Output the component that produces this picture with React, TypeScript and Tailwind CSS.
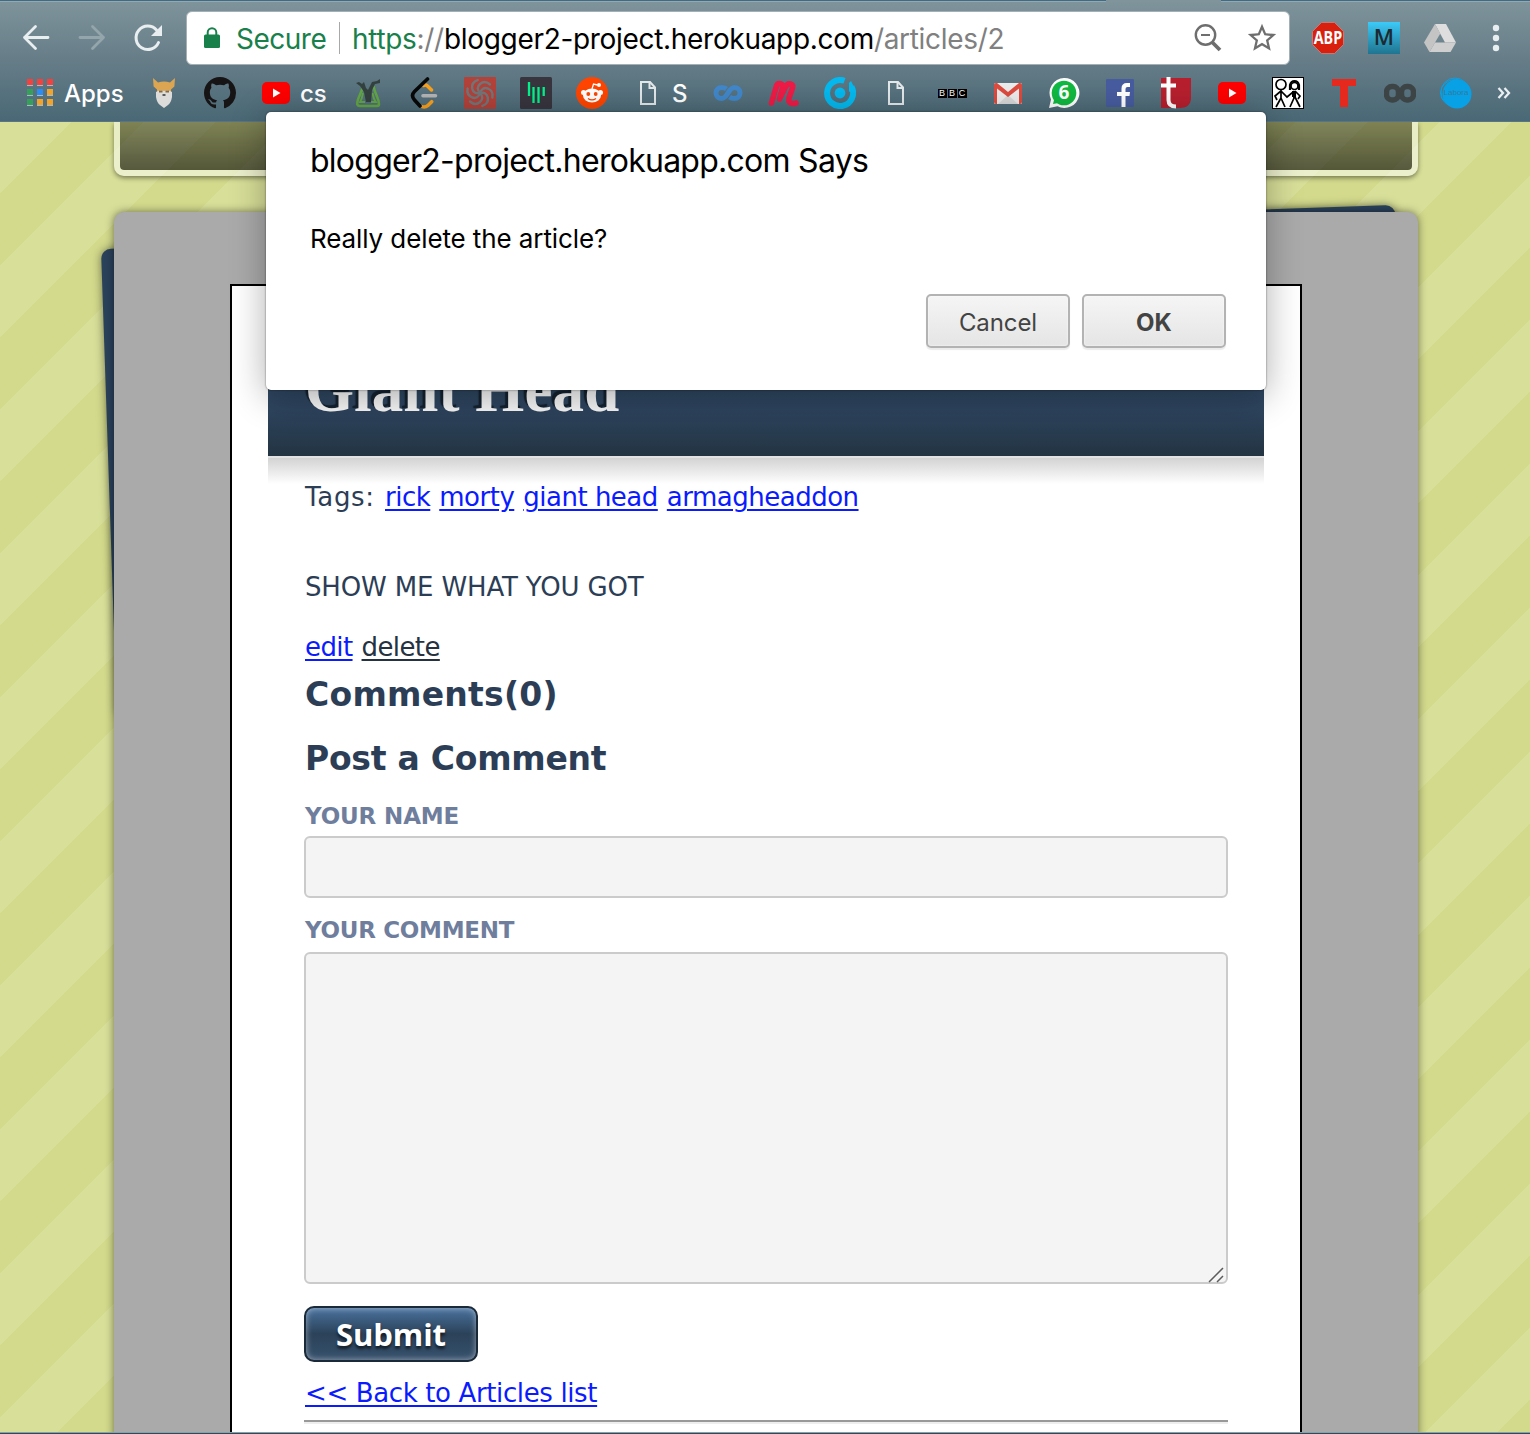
import type { ReactNode } from 'react';
import { MdStarBorder } from 'react-icons/md';

function Box({ children, w = 32, h = 32 }: { children: ReactNode; w?: number; h?: number }) {
  return (
    <svg width={w} height={h} viewBox={`0 0 ${w} ${h}`} className="block shrink-0" fill="none">
      {children}
    </svg>
  );
}

function Cell({ children }: { children: ReactNode }) {
  return <div className="flex w-14 shrink-0 items-center justify-center">{children}</div>;
}

const BackIcon = () => (
  <Box>
    <path d="M28 15.500H4.500M15.500 4.500l-11 11 11 11" stroke="#e9eef0" strokeWidth="2.800" strokeLinecap="round" strokeLinejoin="round" />
  </Box>
);
const ForwardIcon = () => (
  <Box>
    <path d="M4 15.500h23.500M16.500 4.500l11 11-11 11" stroke="#94a5ab" strokeWidth="2.800" strokeLinecap="round" strokeLinejoin="round" />
  </Box>
);
const ReloadIcon = () => (
  <Box>
    <path d="M26.500 20.500A11.700 11.700 0 1 1 24.500 8" stroke="#e9eef0" strokeWidth="3" strokeLinecap="round" />
    <path d="M30 3v11H19z" fill="#e9eef0" />
  </Box>
);
const LockIcon = () => (
  <Box w={24} h={24}>
    <rect x="4" y="8.500" width="16" height="13.500" rx="1.500" fill="#18804a" />
    <path d="M7.700 10V6.500a4.300 4.300 0 0 1 8.600 0V10" stroke="#18804a" strokeWidth="2" />
  </Box>
);
const ZoomOutIcon = () => (
  <Box>
    <circle cx="13.500" cy="13" r="9.700" stroke="#6e6e6e" strokeWidth="2.400" />
    <path d="M9 13h9" stroke="#6e6e6e" strokeWidth="2" />
    <path d="M20.500 20.500l7.500 7.500" stroke="#6e6e6e" strokeWidth="3.800" />
  </Box>
);
const AppsIcon = () => {
  const colors = ['#f5413d', '#f5413d', '#f5413d', '#35a05a', '#2b8cf5', '#f2a32c', '#35a05a', '#f2a32c', '#f2a32c'];
  return (
    <Box w={27} h={28}>
      {colors.map((c, i) => (
        <g key={i}>
          <rect x={(i % 3) * 10} y={Math.floor(i / 3) * 10 + 1} width="6" height="6" fill="#a9bcc4" />
          <rect x={(i % 3) * 10} y={Math.floor(i / 3) * 10} width="6" height="6" fill={c} />
        </g>
      ))}
    </Box>
  );
};
const BeardIcon = () => (
  <Box>
    <path d="M5 1l5 4.500q6-2 12 0L27 1l-.6 8.500-3.400 3V18H9v-5.500l-3.400-3z" fill="#dba552" />
    <path d="M8 15q4-3 8-1 4-2 8 1v5q-1 6-4 8l-4 3-4-3q-3-2-4-8z" fill="#dedcda" />
    <path d="M11 14.500h3.500M17.500 14.500H21" stroke="#8a6a3c" strokeWidth="2" />
    <path d="M14.500 18h3" stroke="#333" strokeWidth="1.500" />
  </Box>
);
const GithubIcon = () => (
  <svg width="32" height="32" viewBox="0 0 16 16" className="block" fill="#161415">
    <path d="M8 0C3.580 0 0 3.580 0 8c0 3.540 2.290 6.530 5.470 7.590.4.070.55-.17.55-.38 0-.19-.01-.82-.01-1.490-2.010.37-2.530-.49-2.690-.94-.09-.23-.48-.94-.82-1.130-.28-.15-.68-.52-.01-.53.63-.01 1.080.58 1.230.82.72 1.210 1.870.87 2.330.66.070-.52.28-.87.51-1.070-1.780-.2-3.640-.89-3.640-3.950 0-.87.31-1.590.82-2.150-.08-.2-.36-1.020.08-2.120 0 0 .67-.21 2.200.82.64-.18 1.320-.27 2-.27s1.360.09 2 .27c1.530-1.040 2.200-.82 2.200-.82.44 1.100.16 1.920.08 2.120.51.56.82 1.270.82 2.150 0 3.070-1.870 3.750-3.650 3.950.29.25.54.73.54 1.480 0 1.070-.01 1.930-.01 2.200 0 .21.15.46.55.38A8.010 8.010 0 0 0 16 8c0-4.420-3.580-8-8-8z" />
  </svg>
);
const YoutubeIcon = () => (
  <Box>
    <rect x="2" y="5" width="28" height="22" rx="5" fill="#fe0000" />
    <path d="M13 11.500v9l7.500-4.500z" fill="#fff" />
  </Box>
);
const SprigIcon = () => (
  <Box>
    <path d="M11 9C10 16 5 21 5.200 27Q5.500 29 8 29h17q2 0 2-2C27 21 23 18 21.500 9" stroke="#62a744" strokeWidth="2.500" />
    <path d="M11 16q-1 6-3 9h5M20.500 16q1 6 3.500 9h-5" stroke="#62a744" strokeWidth="1.800" />
    <path d="M4 6l3-1 3 2 2-2 2 6 2 2 4-8 5-1 3-2v4l-5 1-3 6-1 12h-5l-2-10-4-6z" fill="#33413f" />
  </Box>
);
const LeetIcon = () => (
  <Box>
    <path d="M15.500 8.500q2-1.500 4 .5l4 4M13.700 29.500q3.300 1.500 6-.8l4-4" stroke="#f9a11b" strokeWidth="3.500" strokeLinecap="round" />
    <path d="M19.500 2 6.500 14.500q-4 4 0 8.500l5.500 6" stroke="#080808" strokeWidth="3.600" strokeLinecap="round" />
    <path d="M15 18.700h12.500" stroke="#b5b5b5" strokeWidth="3.600" strokeLinecap="round" />
  </Box>
);
const SwirlIcon = () => (
  <Box>
    <rect width="32" height="32" rx="1" fill="#b2423a" />
    <g stroke="#737679" strokeWidth="2.400" strokeLinecap="round">
      {[0, 60, 120, 180, 240, 300].map((a) => (
        <path key={a} d="M16 16Q11.500 11 16 7q5-4 10 .5" transform={`rotate(${a} 16 16)`} />
      ))}
    </g>
  </Box>
);
const BarsIcon = () => (
  <Box>
    <rect width="32" height="32" rx="1.500" fill="#39353f" />
    <path d="M9 5v14M13.500 10v16M18.500 10v16M23.700 10v9" stroke="#00f58a" strokeWidth="2.300" />
  </Box>
);
const RedditIcon = () => (
  <Box>
    <circle cx="16" cy="16" r="16" fill="#ff4500" />
    <path d="M16 12l1.500-5 4 1" stroke="#fff" strokeWidth="1.300" />
    <circle cx="23" cy="8" r="2" fill="#fff" />
    <circle cx="7.500" cy="15.500" r="2.500" fill="#fff" />
    <circle cx="24.500" cy="15.500" r="2.500" fill="#fff" />
    <ellipse cx="16" cy="18.500" rx="9" ry="7" fill="#fff" />
    <circle cx="12.300" cy="17" r="1.900" fill="#ff4500" />
    <circle cx="19.700" cy="17" r="1.900" fill="#ff4500" />
    <path d="M12 21.500q4 2.800 8 0" stroke="#ff4500" strokeWidth="1.300" />
  </Box>
);
const FileIcon = () => (
  <Box>
    <path d="M9 5h9l5 5.500V27H9z" stroke="#e3e8ea" strokeWidth="2" />
    <path d="M17.500 5v6H23" stroke="#e3e8ea" strokeWidth="2" />
  </Box>
);
const InfinityIcon = () => (
  <Box>
    <path
      d="M14.500 12Q12.500 10.500 9.500 10.500a5.500 5.500 0 0 0 0 11C16 21.500 16 10.500 22.500 10.500a5.500 5.500 0 0 1 0 11q-3 0-5-1.500"
      stroke="#4187ca"
      strokeWidth="5"
    />
  </Box>
);
const MeetIcon = () => (
  <Box>
    <path
      d="M3.500 26 8.500 9q1-3 4-2.300 3 1 2 4.300l-3 11 6-12q2-4 5-3t2 4l-3.500 10q-1 5 3 5.500 2.500.4 4-.5"
      stroke="#ee1b46"
      strokeWidth="5.600"
      strokeLinecap="round"
      strokeLinejoin="round"
    />
  </Box>
);
const TargetIcon = () => (
  <Box>
    <path d="M20.500 3.800A13 13 0 1 0 27.500 9.800" stroke="#04b9ef" strokeWidth="6" />
    <path d="M27 4l4 8-6 3V6z" fill="#04b9ef" />
    <circle cx="16" cy="16" r="5.400" fill="#04b9ef" />
  </Box>
);
const Bbc = () => (
  <div className="flex gap-px font-['Liberation_Sans'] text-[9px] leading-[9px] font-normal text-white">
    <span className="w-[9px] bg-black text-center">B</span>
    <span className="w-[9px] bg-black text-center">B</span>
    <span className="w-[9px] bg-black text-center">C</span>
  </div>
);
const GmailIcon = () => (
  <Box>
    <rect x="2" y="6" width="28" height="21" rx="1.500" fill="#ececec" />
    <path d="M6 27l10-9 10 9" fill="#d8d8d8" />
    <path d="M2 7.500V25q0 2 2 2h1V11.500L16 20l11-8.500V27h1q2 0 2-2V7.500Q30 6 28 6h-1L16 15 5 6H4Q2 6 2 7.500z" fill="#dd4b3e" />
  </Box>
);
const ChatBadge = () => (
  <div className="relative flex h-8 w-8 items-center justify-center">
    <svg viewBox="0 0 32 32" className="absolute inset-0 h-8 w-8">
      <path d="M16 1a15 15 0 1 1-6.500 28.300L1 31l2-8.500A15 15 0 0 1 16 1z" fill="#fff" />
      <circle cx="16" cy="16" r="12.300" fill="#10b941" />
      <path d="M5 27l1.500-6 4 5z" fill="#10b941" />
    </svg>
    <span className="relative -top-px font-['Open_Sans'] text-[19px] leading-8 font-bold text-white">6</span>
  </div>
);
const FacebookIcon = () => (
  <Box>
    <rect x="2" y="2" width="28" height="28" rx="1" fill="#475c9f" />
    <path d="M17.500 30V19H13v-4h4.500v-3.500Q17.500 6 23 6h3v4h-2.500q-2 0-2 2v3H26l-.5 4h-4v11z" fill="#fff" />
  </Box>
);
const TedIcon = () => (
  <Box>
    <path d="M1 1h30v19q0 11-11 11H1z" fill="#b71f2e" />
    <path d="M8.500 0v23q0 6.500 7.500 6.500M1 8.500h15" stroke="#fff" strokeWidth="4" />
  </Box>
);
const ComicIcon = () => (
  <Box>
    <rect x=".5" y=".5" width="31" height="31" fill="#fff" stroke="#000" />
    <g stroke="#000" strokeWidth="1.700">
      <circle cx="9" cy="7.500" r="5" />
      <path d="M9 13v8l-5 9M9 21l4 9M9 14l-6 5 2 4M9 14l6 6 6-5 1 6-4 9M23 14l5 5-2 3M23 20l5 10" />
      <circle cx="22.500" cy="9" r="3.500" />
      <path d="M18 13V8q1-4 4.500-4T27 8v5" strokeWidth="2.200" />
      <path d="M22 14v6" strokeWidth="4" />
    </g>
  </Box>
);
const TIcon = () => (
  <Box>
    <path d="M4 2h24v7h-8v21h-8V9H4z" fill="#e5291f" />
  </Box>
);
const MaskIcon = () => (
  <Box>
    <rect x="2.500" y="9.500" width="12" height="13.500" rx="5.500" stroke="#3d4446" strokeWidth="5.500" />
    <rect x="17.500" y="9.500" width="12" height="13.500" rx="5.500" stroke="#3d4446" strokeWidth="5.500" />
  </Box>
);
const BubbleIcon = () => (
  <div className="relative flex h-8 w-8 items-center justify-center">
    <svg viewBox="0 0 32 32" className="absolute inset-0 h-8 w-8" fill="none">
      <circle cx="17" cy="17" r="14.500" fill="#08a1e6" />
      <circle cx="15" cy="15" r="14" stroke="#08a1e6" />
      <ellipse cx="15.500" cy="16" rx="15" ry="13.500" stroke="#08a1e6" />
    </svg>
    <span className="relative font-['Liberation_Sans'] text-[8px] text-[#357a9d]">Labora</span>
  </div>
);
const AbpIcon = () => (
  <div className="relative flex h-8 w-8 items-center justify-center">
    <svg viewBox="0 0 32 32" className="absolute inset-0 h-8 w-8">
      <path d="M9.500.5h13l9 9v13l-9 9h-13l-9-9v-13z" fill="#d9200f" stroke="#c88d88" strokeWidth=".7" />
    </svg>
    <span className="relative scale-x-[0.84] font-['Open_Sans'] text-[17px] leading-8 font-bold text-white">ABP</span>
  </div>
);
const DriveIcon = () => (
  <Box>
    <path d="M11 2h11l10 18.500H21z" fill="#dedede" />
    <path d="M11 2l5.300 9.500L5.500 30 0 20.500z" fill="#c4c4c4" />
    <path d="M11 20.500h21L26.500 30h-21z" fill="#cfcfcf" />
  </Box>
);
const DotsIcon = () => (
  <Box>
    <circle cx="16" cy="6" r="3.200" fill="#e9eef0" />
    <circle cx="16" cy="16" r="3.200" fill="#e9eef0" />
    <circle cx="16" cy="26" r="3.200" fill="#e9eef0" />
  </Box>
);

function BrowserBar() {
  return (
    <header className="flex h-[122px] flex-col border-b border-[#577584] bg-linear-to-b from-[#7f949b] via-[#667d88] to-[#496875] font-['Inter',sans-serif]">
      <div className="flex h-[2px] shrink-0 border-b border-[#91a9b5] bg-[#426a80]">
        <div className="ml-[1106px] h-[2px] w-[115px] bg-[#7f949b]" />
      </div>
      <div className="flex h-[72px] shrink-0 items-center pl-2">
        <Cell><BackIcon /></Cell>
        <Cell><ForwardIcon /></Cell>
        <Cell><ReloadIcon /></Cell>
        <div className="ml-[10px] flex h-[54px] w-[1104px] shrink-0 items-center rounded-md border border-[#a5b0b4] bg-white pl-[13px] text-[28px] whitespace-nowrap">
          <LockIcon />
          <span className="ml-3 w-[103px] shrink-0 pt-[2px] tracking-[-0.5px] text-[#18804a]">Secure</span>
          <span className="h-8 w-px shrink-0 bg-[#a8a8a8]" />
          <span className="ml-3 flex-1 pt-[2px] tracking-[-0.31px] text-black">
            <span className="text-[#18804a]">https</span>
            <span className="text-[#808080]">://</span>
            blogger2-project.herokuapp.com
            <span className="text-[#808080]">/articles/2</span>
          </span>
          <div className="mr-[21px] -mt-px"><ZoomOutIcon /></div>
          <MdStarBorder className="mr-[10px] h-[34px] w-[34px] shrink-0 text-[#6e6e6e]" />
        </div>
        <div className="ml-[10px] flex">
          <Cell><AbpIcon /></Cell>
          <Cell>
            <div className="flex h-8 w-8 items-center justify-center bg-linear-to-b from-[#3ccaf8] to-[#1f7590] pb-1 font-['Open_Sans'] text-[22px] leading-none font-semibold text-[#1d2a30]">M</div>
          </Cell>
          <Cell><DriveIcon /></Cell>
          <Cell><DotsIcon /></Cell>
        </div>
      </div>
      <div className="flex h-[38px] shrink-0 items-center text-[24px] font-medium whitespace-nowrap text-white">
        <div className="flex w-[136px] shrink-0 items-center pl-[27px]">
          <AppsIcon />
          <span className="ml-[10px] pt-[2px]">Apps</span>
        </div>
        <Cell><BeardIcon /></Cell>
        <Cell><GithubIcon /></Cell>
        <div className="flex w-[92px] shrink-0 items-center pl-3">
          <YoutubeIcon />
          <span className="ml-2 pt-[2px]">cs</span>
        </div>
        <Cell><SprigIcon /></Cell>
        <Cell><LeetIcon /></Cell>
        <Cell><SwirlIcon /></Cell>
        <Cell><BarsIcon /></Cell>
        <Cell><RedditIcon /></Cell>
        <div className="flex w-20 shrink-0 items-center pl-3">
          <FileIcon />
          <span className="ml-2 pt-[2px]">S</span>
        </div>
        <Cell><InfinityIcon /></Cell>
        <Cell><MeetIcon /></Cell>
        <Cell><TargetIcon /></Cell>
        <Cell><FileIcon /></Cell>
        <Cell><Bbc /></Cell>
        <Cell><GmailIcon /></Cell>
        <Cell><ChatBadge /></Cell>
        <Cell><FacebookIcon /></Cell>
        <Cell><TedIcon /></Cell>
        <Cell><YoutubeIcon /></Cell>
        <Cell><ComicIcon /></Cell>
        <Cell><TIcon /></Cell>
        <Cell><MaskIcon /></Cell>
        <Cell><BubbleIcon /></Cell>
        <svg width="14" height="14" viewBox="0 0 14 14" className="ml-[13px] block" fill="none">
          <path d="M1.500 2l4.500 5-4.500 5M7.500 2l4.500 5-4.500 5" stroke="#e9eef0" strokeWidth="2.300" />
        </svg>
      </div>
    </header>
  );
}

function Link({ children }: { children: ReactNode }) {
  return (
    <a href="#" className="text-[#0a1bff] underline decoration-2 underline-offset-[3px]">
      {children}
    </a>
  );
}

function Article() {
  return (
    <main className="mx-[116px] mt-[72px] h-[1200px] border-2 border-black bg-white font-['DejaVu_Sans',sans-serif] text-[26px] text-[#2c3e56]">
      <div className="mx-9 mt-9 flex h-[134px] items-start bg-linear-to-b from-[#2f4a66] via-[#2e455f] via-65% to-[#233442] pt-[32px] pl-[37px]">
        <h1 className="font-['Liberation_Serif',serif] text-[63px] leading-[72px] font-bold tracking-[0.1px] whitespace-nowrap text-[#f8f8f8] [text-shadow:-3px_-3px_1px_#14212e]">
          Giant Head
        </h1>
      </div>
      <div className="mx-9 h-7 border-t-2 border-[#e3e3e3] bg-linear-to-b from-[#d3d3d3] to-white" />
      <div className="flex flex-col px-[72px] whitespace-nowrap">
        <p className="flex h-[26px] gap-[9px] pl-px leading-[26px] tracking-[-0.5px]">
          <span className="w-[71px] tracking-[0.7px]">Tags:</span>
          <Link>rick</Link> <Link>morty</Link> <Link>giant head</Link> <Link>armagheaddon</Link>
        </p>
        <p className="mt-[62px] h-[30px] pl-px leading-[30px] tracking-[-0.15px]">SHOW ME WHAT YOU GOT</p>
        <p className="mt-[30px] flex h-[30px] gap-[9px] pl-px leading-[30px] tracking-[-0.6px]">
          <Link>edit</Link>
          <a href="#" className="text-[#25323f] underline decoration-2 underline-offset-[3px]">delete</a>
        </p>
        <h2 className="mt-[13px] h-[40px] pl-px text-[33px] leading-[40px] font-bold tracking-[0.25px]">Comments(0)</h2>
        <h2 className="mt-6 h-[40px] pl-px text-[33px] leading-[40px] font-bold tracking-[-0.25px]">Post a Comment</h2>
        <label className="mt-[22px] h-[30px] pl-px text-[23px] leading-[30px] font-bold tracking-[-0.15px] text-[#6e7e9c]">YOUR NAME</label>
        <input className="mt-[5px] h-[62px] w-full rounded-md border-2 border-[#cbcbcb] bg-[#f4f4f4]" />
        <label className="mt-[17px] h-[30px] pl-px text-[23px] leading-[30px] font-bold tracking-[-0.3px] text-[#6e7e9c]">YOUR COMMENT</label>
        <div className="relative mt-[7px] h-[332px]">
          <textarea className="block h-full w-full resize-none rounded-md border-2 border-[#cbcbcb] bg-[#f4f4f4]" />
          <svg className="absolute right-1 bottom-px" width="16" height="16" viewBox="0 0 16 16" fill="none">
            <path d="M1 15 15 1M9 15l6-6" stroke="#5c5c5c" strokeWidth="1.500" />
          </svg>
        </div>
        <button className="mt-[22px] flex h-14 w-[174px] items-center justify-center rounded-[10px] border-2 border-[#1b2a38] bg-linear-to-b from-[#4a739f] via-[#2b4259] to-[#37516d] font-['Open_Sans',sans-serif] text-[31px] leading-none font-bold tracking-[-0.1px] text-white shadow-[inset_0_0_6px_rgba(255,255,255,0.5)] [text-shadow:0_3px_3px_rgba(0,0,0,0.6)]">
          Submit
        </button>
        <p className="mt-4 h-[30px] pl-px leading-[30px] tracking-[-0.37px]">
          <Link>&lt;&lt; Back to Articles list</Link>
        </p>
        <hr className="mt-3 h-1 border-t-2 border-b-2 border-t-[#999] border-b-[#eee]" />
      </div>
    </main>
  );
}

function ConfirmDialog() {
  return (
    <div
      role="dialog"
      className="absolute top-[112px] left-[266px] flex h-[278px] w-[1000px] flex-col rounded-[5px] bg-white pt-[26px] pr-10 pl-11 font-['Inter',sans-serif] whitespace-nowrap text-black shadow-[0_0_2px_rgba(0,0,0,0.6),0_6px_36px_rgba(0,0,0,0.32)]"
    >
      <h2 className="h-[46px] text-[32px] leading-[46px] tracking-[-0.74px]">blogger2-project.herokuapp.com Says</h2>
      <p className="mt-[36px] h-[38px] text-[26px] leading-[38px] tracking-[-0.1px]">Really delete the article?</p>
      <div className="mt-9 flex justify-end gap-3 text-[24px] text-[#434343]">
        <button className="h-[54px] w-36 rounded-[5px] border-2 border-[#b3b3b3] bg-linear-to-b from-[#f5f5f5] to-[#e5e5e5] pt-1 tracking-[-0.1px] shadow-[0_2px_1px_rgba(0,0,0,0.08),inset_0_0_2px_#fff]">Cancel</button>
        <button className="h-[54px] w-36 rounded-[5px] border-2 border-[#b3b3b3] bg-linear-to-b from-[#f5f5f5] to-[#e5e5e5] pt-1 font-bold shadow-[0_2px_1px_rgba(0,0,0,0.08),inset_0_0_2px_#fff]">OK</button>
      </div>
    </div>
  );
}

export default function App() {
  return (
    <div className="relative h-[1434px] w-[1530px] overflow-hidden">
      <BrowserBar />
      <div className="relative h-[1310px] overflow-hidden bg-[repeating-linear-gradient(135deg,#d8df98_0px,#d8df98_50.91px,#d3da8c_50.91px,#d3da8c_101.82px)]">
        <div className="mr-[112px] ml-[114px] h-[54px] rounded-b-[10px] border-6 border-t-0 border-white/50 bg-linear-to-b from-black/40 to-black/60 bg-clip-padding shadow-[0_2px_5px_rgba(0,0,0,0.45)]" />
        <div className="relative mt-9 mr-[112px] ml-[114px]">
          <div className="absolute top-[37px] left-[-13px] h-[470px] w-[1295px] origin-top-left rotate-[-1.95deg] rounded-[10px] bg-[#2b425b] shadow-[0_0_10px_rgba(0,0,0,0.5)]" />
          <div className="relative flow-root h-[1300px] rounded-t-[10px] bg-[#aaaaaa] shadow-[0_0_9px_rgba(0,0,0,0.5)]">
            <Article />
          </div>
        </div>
      </div>
      <div className="h-[2px] border-t border-[#87a0ab] bg-[#2c4d58]" />
      <ConfirmDialog />
    </div>
  );
}
